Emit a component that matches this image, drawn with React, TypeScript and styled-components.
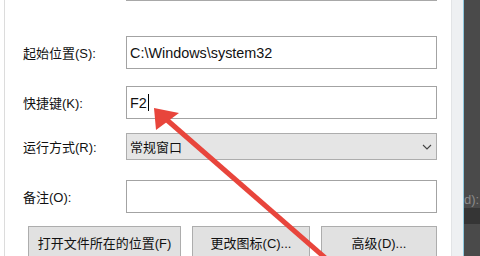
import styled, { createGlobalStyle } from "styled-components";

const GlobalStyle = createGlobalStyle`
  html, body {
    margin: 0;
    padding: 0;
    background: #ffffff;
  }
  body {
    font-family: "Liberation Sans", "Noto Sans CJK SC", sans-serif;
    color: #111111;
  }
`;

const Screen = styled.div`
  position: relative;
  display: flex;
  width: 480px;
  height: 256px;
  overflow: hidden;
  background: #ffffff;
`;

const Margin = styled.div`
  width: 4px;
  background: #ffffff;
`;

const Dialog = styled.div`
  flex: 1;
  display: flex;
  flex-direction: column;
  padding-left: 17px;
  border-left: 1px solid #dcdcdc;
  background: #ffffff;
`;

const TopStub = styled.div`
  margin-left: 104px;
  width: 311px;
  height: 1px;
  box-sizing: border-box;
  border: 1px solid #a8a8a8;
  border-top: none;
`;

const Separator = styled.div`
  margin-top: 14px;
  width: 415px;
  height: 1px;
  background: #cfcfcf;
`;

const Row = styled.div<{ $gap: number }>`
  display: grid;
  grid-template-columns: 104px 311px;
  align-items: center;
  margin-top: ${(p) => p.$gap}px;
`;

const Label = styled.label`
  font-size: 13px;
  padding-left: 1px;
  color: #111111;
  white-space: nowrap;
`;

const Field = styled.div`
  display: flex;
  align-items: center;
  height: 33px;
  box-sizing: border-box;
  border: 1px solid #a3a3a3;
  background: #ffffff;
  padding-left: 3px;
  font-size: 14.4px;
  color: #111111;
`;

const Caret = styled.span`
  display: inline-block;
  width: 1px;
  height: 17px;
  margin-left: 1px;
  background: #000000;
`;

const Select = styled.div`
  display: flex;
  align-items: center;
  justify-content: space-between;
  height: 27px;
  box-sizing: border-box;
  border: 1px solid #adadad;
  background: #e5e5e5;
  padding: 0 4px 0 3px;
  font-size: 13px;
  color: #111111;
`;

const Buttons = styled.div`
  display: flex;
  margin-top: 13px;
  margin-left: 6px;
  gap: 11px;
`;

const Button = styled.div<{ $width: number }>`
  display: flex;
  align-items: center;
  justify-content: center;
  width: ${(p) => p.$width}px;
  height: 32px;
  box-sizing: border-box;
  border: 1px solid #adadad;
  background: #e1e1e1;
  font-size: 13px;
  color: #111111;
  white-space: nowrap;
`;

const Strip = styled.div`
  width: 11px;
  background: #eef0f2;
  border-left: 1px solid #e2e4e6;
`;

const EdgeLine = styled.div`
  width: 1px;
  background: #8fc8de;
`;

const Backdrop = styled.div`
  width: 16px;
  display: flex;
  flex-direction: column;
  background: #4a4a4a;
`;

const BackText = styled.div`
  margin-top: 192px;
  font-size: 13px;
  color: #8a8a8a;
  white-space: nowrap;
  overflow: hidden;
`;

const BackBand = styled.div`
  margin-top: 1px;
  height: 16px;
  background: #353535;
`;

const Overlay = styled.svg`
  position: absolute;
  left: 0;
  top: 0;
  pointer-events: none;
`;

const Chevron = () => (
  <svg width="10" height="6" viewBox="0 0 10 6">
    <path d="M1 1 L5 5 L9 1" fill="none" stroke="#444" strokeWidth="1.1" />
  </svg>
);

export default function App() {
  return (
    <>
      <GlobalStyle />
      <Screen>
        <Margin />
        <Dialog>
          <TopStub />
          <Separator />
          <Row $gap={21}>
            <Label>起始位置(S):</Label>
            <Field>C:\Windows\system32</Field>
          </Row>
          <Row $gap={17}>
            <Label>快捷键(K):</Label>
            <Field>
              F2
              <Caret />
            </Field>
          </Row>
          <Row $gap={14}>
            <Label>运行方式(R):</Label>
            <Select>
              <span>常规窗口</span>
              <Chevron />
            </Select>
          </Row>
          <Row $gap={20}>
            <Label>备注(O):</Label>
            <Field />
          </Row>
          <Buttons>
            <Button $width={153}>打开文件所在的位置(F)</Button>
            <Button $width={118}>更改图标(C)...</Button>
            <Button $width={116}>高级(D)...</Button>
          </Buttons>
        </Dialog>
        <Strip />
        <EdgeLine />
        <Backdrop>
          <BackText>d):</BackText>
          <BackBand />
        </Backdrop>
        <Overlay width="480" height="256" viewBox="0 0 480 256">
          <line x1="167" y1="120" x2="330" y2="262" stroke="#e8453c" strokeWidth="5" />
          <polygon points="154,108 156,130 179,113" fill="#e8453c" />
        </Overlay>
      </Screen>
    </>
  );
}
